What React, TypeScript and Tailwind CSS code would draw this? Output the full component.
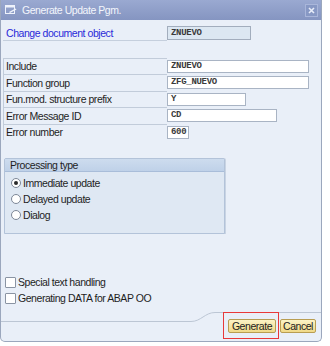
import React from "react";

type Row = { label: string; value: string; w: string; h: string };

const rows: Row[] = [
  { label: "Include", value: "ZNUEVO", w: "w-[142px]", h: "h-[16px]" },
  { label: "Function group", value: "ZFG_NUEVO", w: "w-[142px]", h: "h-[17px]" },
  { label: "Fun.mod. structure prefix", value: "Y", w: "w-[79px]", h: "h-[16px]" },
  { label: "Error Message ID", value: "CD", w: "w-[110px]", h: "h-[17px]" },
  { label: "Error number", value: "600", w: "w-[22px]", h: "h-[16px]" },
];

function Radio({ checked, label }: { checked?: boolean; label: string }) {
  return (
    <div className="h-[16px] flex items-center">
      <span className="w-[10px] h-[10px] rounded-full border border-[#7d8797] bg-white flex items-center justify-center">
        {checked && <span className="w-[4px] h-[4px] rounded-full bg-[#2a2a2a]" />}
      </span>
      <span className="ml-[2px]">{label}</span>
    </div>
  );
}

function Check({ label }: { label: string }) {
  return (
    <div className="h-[16px] flex items-center">
      <span className="w-[11px] h-[11px] rounded-[1px] border border-[#8a94a3] bg-white" />
      <span className="ml-[2px]">{label}</span>
    </div>
  );
}

export default function App() {
  return (
    <div className="w-[330px] h-[346px] bg-white font-['Liberation_Sans',Arial,sans-serif] text-[10.5px] tracking-[-0.45px] text-[#1e1e1e] leading-none">
      <div className="w-[322px] h-[342px] flex flex-col bg-[#e9eff8] border-x border-b border-[#9ba7bd] rounded-b-[5px] overflow-hidden">
        {/* Title bar */}
        <div className="h-[20px] shrink-0 flex items-center bg-gradient-to-b from-[#9aa9d1] to-[#8595c1] text-[#f3f6fc]">
          <svg className="ml-[4px]" width="12" height="10" viewBox="0 0 12 10">
            <rect x="0.5" y="0.5" width="9" height="8" fill="none" stroke="#eef2fb" strokeWidth="1" />
            <rect x="0.5" y="0.5" width="9" height="2" fill="#eef2fb" />
            <path d="M4 7 L10.5 3.5 L11.5 4.5 L5 8 Z" fill="#eef2fb" />
          </svg>
          <span className="ml-[5px] text-[10.5px] tracking-[-0.45px]">Generate Update Pgm.</span>
          <div className="ml-auto mr-[3px] w-[13px] h-[13px] bg-[#8798c4] border border-[#a9b6da] flex items-center justify-center">
            <svg width="7" height="7" viewBox="0 0 7 7">
              <path d="M1 1 L6 6 M6 1 L1 6" stroke="#e8edf9" strokeWidth="1.6" />
            </svg>
          </div>
        </div>

        {/* Change document object */}
        <div className="mt-[6px] ml-[2px] flex items-start h-[15px]">
          <div className="w-[164px] h-[15px] border-b border-[#c5cfdd] flex items-center pl-[3px] text-[#2a2ad8]">
            Change document object
          </div>
          <div className="w-[84px] h-[14px] bg-[#dce7f2] border border-[#a2adbd] flex items-center pl-[3px] font-['Liberation_Mono',monospace] font-bold text-[9px] tracking-[-0.3px] text-[#3a3a3a]">
            ZNUEVO
          </div>
        </div>

        {/* Field rows */}
        <div className="mt-[17px] ml-[2px] flex flex-col">
          {rows.map((r) => (
            <div key={r.label} className={`flex items-center ${r.h}`}>
              <div className={`w-[164px] ${r.h} border-l border-t border-[#c2ccda] flex items-center pl-[2px]`}>
                {r.label}
              </div>
              <div className={`${r.w} h-[13px] bg-white border border-[#a9b4c4] flex items-center pl-[3px] font-['Liberation_Mono',monospace] font-bold text-[9px] tracking-[-0.3px] text-[#3a3a3a]`}>
                {r.value}
              </div>
            </div>
          ))}
        </div>

        {/* Processing type group */}
        <div className="mt-[18px] ml-[3px] w-[221px] h-[76px] border border-[#b3c3d9] rounded-t-[2px] bg-[#dfe8f3] flex flex-col shadow-[1px_0_0_#c9d4e3]">
          <div className="h-[13px] bg-gradient-to-b from-[#cddcee] to-[#bfd1e8] border-b border-[#a9bdd9] flex items-center pl-[5px]">
            Processing type
          </div>
          <div className="mt-[3px] pl-[6px] flex flex-col">
            <Radio checked label="Immediate update" />
            <Radio label="Delayed update" />
            <Radio label="Dialog" />
          </div>
        </div>

        {/* Checkboxes */}
        <div className="mt-[40px] ml-[4px] flex flex-col">
          <Check label="Special text handling" />
          <Check label="Generating DATA for ABAP OO" />
        </div>

        {/* Footer */}
        <div className="mt-auto relative h-[29px] flex justify-end items-start pt-[7px] pr-[5px] gap-[4px]">
          <svg className="absolute left-0 top-0" width="320" height="12" viewBox="0 0 320 12">
            <path d="M0 9.5 H190 C200 9.5 204 0.5 214 0.5 H320" fill="none" stroke="#bcc6d4" strokeWidth="1" />
          </svg>
          <button className="relative w-[48px] h-[14px] rounded-[2px] border border-[#b89d52] bg-gradient-to-b from-[#fcf3c6] to-[#f0d987] text-[#222] flex items-center justify-center">
            Generate
          </button>
          <button className="relative w-[36px] h-[14px] rounded-[2px] border border-[#b89d52] bg-gradient-to-b from-[#fcf3c6] to-[#f0d987] text-[#222] flex items-center justify-center">
            Cancel
          </button>
          <div className="absolute left-[222px] top-0 w-[56px] h-[27px] border border-[#e8393a]" />
        </div>
      </div>
    </div>
  );
}
